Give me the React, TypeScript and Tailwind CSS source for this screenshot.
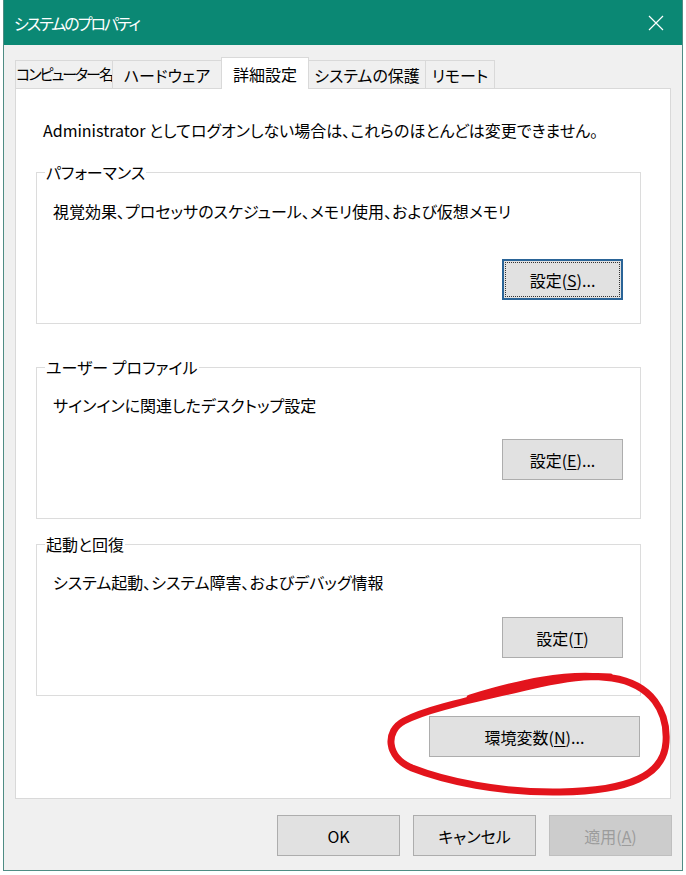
import * as React from 'react';

const font = { fontFamily: '"Noto Sans CJK JP", "Noto Sans", sans-serif' };

function Btn({ label, focused = false, disabled = false, className = '' }: { label: React.ReactNode; focused?: boolean; disabled?: boolean; className?: string }) {
  if (focused) {
    return (
      <div className={`h-[41px] w-[121px] border-2 border-[#2a6497] bg-[#e1e1e1] p-[1px] ${className}`}>
        <div className="flex h-full w-full items-center justify-center border border-dotted border-[#333] text-[16px] text-black">
          {label}
        </div>
      </div>
    );
  }
  return (
    <div
      className={`flex h-[41px] items-center justify-center border text-[16px] ${
        disabled ? 'border-[#bfbfbf] bg-[#cccccc] text-[#9c9c9c]' : 'border-[#adadad] bg-[#e1e1e1] text-black'
      } ${className}`}
    >
      {label}
    </div>
  );
}

function Group({ title, desc, button, descTop, btnTop }: { title: string; desc: string; button: React.ReactNode; descTop: string; btnTop: string }) {
  return (
    <div className="relative h-[152px] w-[605px] border border-[#dcdcdc]">
      <span className="absolute left-[8px] top-[-12px] bg-white px-[1px] text-[16px] leading-[22px] text-black">{title}</span>
      <div className={`pl-[16px] text-[16px] leading-[22px] text-black ${descTop}`}>{desc}</div>
      <div className={`flex justify-end pr-[17px] ${btnTop}`}>{button}</div>
    </div>
  );
}

const u = (c: string) => <span className="underline underline-offset-2">{c}</span>;

export default function App() {
  const tabs = [
    { name: 'コンピューター名', w: 'w-[98px]', tr: 'text-[15px] tracking-[-2px]' },
    { name: 'ハードウェア', w: 'w-[110px]', tr: 'text-[16px] tracking-[0px]' },
    { name: '詳細設定', w: 'w-[88px]', tr: 'text-[16px]', active: true },
    { name: 'システムの保護', w: 'w-[118px]', tr: 'text-[16px] tracking-[0px]' },
    { name: 'リモート', w: 'w-[70px]', tr: 'text-[16px] tracking-[0px]' },
  ];

  return (
    <div className="relative h-[875px] w-[686px] overflow-hidden bg-white [font-feature-settings:'palt']" style={font}>
      <div className="ml-[3px] flex h-[871px] w-[680px] flex-col border border-t-0 border-[#4f8c84] bg-[#f0f0f0]">
        {/* title bar */}
        <div className="flex h-[45px] shrink-0 items-center justify-between bg-[#0b8874] pl-[10px] pr-[18px]">
          <span className="text-[16px] tracking-[-2px] text-white">システムのプロパティ</span>
          <svg width="16" height="16" viewBox="0 0 16 16" stroke="white" strokeWidth="1.2">
            <path d="M1 1 L15 15 M15 1 L1 15" />
          </svg>
        </div>

        {/* tabs */}
        <div className="mt-[12px] flex h-[31px] items-end pl-[11px]">
          {tabs.map((t, i) =>
            t.active ? (
              <div
                key={t.name}
                className={`relative z-10 -mb-[1px] -ml-[1px] flex h-[32px] ${t.w} items-center justify-center whitespace-nowrap border border-b-0 border-[#d9d9d9] bg-white ${t.tr} text-black`}
              >
                {t.name}
              </div>
            ) : (
              <div
                key={t.name}
                className={`${i === 0 ? '' : '-ml-[1px]'} flex h-[28px] ${t.w} items-center justify-center overflow-hidden whitespace-nowrap border border-b-0 border-[#d9d9d9] bg-[#f0f0f0] ${t.tr} text-black`}
              >
                {t.name}
              </div>
            )
          )}
        </div>

        {/* panel */}
        <div className="ml-[11px] flex h-[711px] w-[656px] flex-col border border-[#d9d9d9] bg-white">
          <div className="pl-[27px] pt-[30px] text-[16px] leading-[22px] text-black">
            Administrator としてログオンしない場合は、これらのほとんどは変更できません。
          </div>
          <div className="ml-[20px] mt-[31px] flex flex-col">
            <Group
              title="パフォーマンス"
              desc="視覚効果、プロセッサのスケジュール、メモリ使用、および仮想メモリ"
              descTop="pt-[27px]"
              btnTop="mt-[37px]"
              button={<Btn focused label={<span>設定({u('S')})...</span>} />}
            />
            <div className="mt-[43px]">
              <Group
                title="ユーザー プロファイル"
                desc="サインインに関連したデスクトップ設定"
                descTop="pt-[26px]"
                btnTop="mt-[23px]"
                button={<Btn className="w-[121px]" label={<span>設定({u('E')})...</span>} />}
              />
            </div>
            <div className="mt-[25px]">
              <Group
                title="起動と回復"
                desc="システム起動、システム障害、およびデバッグ情報"
                descTop="pt-[26px]"
                btnTop="mt-[24px]"
                button={<Btn className="w-[121px]" label={<span>設定({u('T')})</span>} />}
              />
            </div>
            <div className="mt-[20px] flex justify-end pr-[30px]">
              <Btn className="w-[211px]" label={<span>環境変数({u('N')})...</span>} />
            </div>
          </div>
        </div>

        {/* footer buttons */}
        <div className="mt-[16px] flex justify-end gap-[13px] pr-[10px]">
          <Btn className="w-[123px]" label="OK" />
          <Btn className="w-[123px]" label="キャンセル" />
          <Btn disabled className="w-[123px]" label={<span>適用({u('A')})</span>} />
        </div>
      </div>

      {/* red hand-drawn circle */}
      <svg className="pointer-events-none absolute left-0 top-0" width="686" height="875" viewBox="0 0 686 875">
        <path
          d="M470 698 C520 683 565 672 612 678 C652 684 668 712 666 742 C664 775 630 791 560 792 C500 793 445 781 412 768 C386 757 385 731 404 721 C426 709 470 700 530 686 C560 679 590 675 610 677"
          fill="none"
          stroke="#e3141c"
          strokeWidth="7"
          strokeLinecap="round"
          strokeLinejoin="round"
        />
      </svg>
    </div>
  );
}
